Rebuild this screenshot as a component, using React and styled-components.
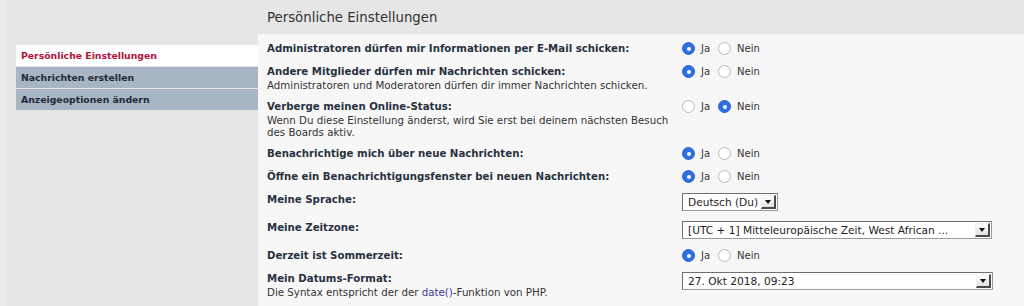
import React from "react";
import styled, { createGlobalStyle } from "styled-components";

const GlobalStyle = createGlobalStyle`
  html, body { margin: 0; padding: 0; }
  body {
    background: #e6e6e6;
    font-family: "DejaVu Sans", Verdana, sans-serif;
    color: #333;
  }
`;

const Page = styled.div`
  display: flex;
  min-height: 306px;
  border-left: 7px solid #ebebeb;
  background: #e6e6e6;
`;

const Sidebar = styled.nav`
  width: 242px;
  flex: none;
  padding: 45px 0 0 9px;
  display: flex;
  flex-direction: column;
  gap: 1px;
`;

const NavItem = styled.a`
  display: block;
  height: 21px;
  line-height: 22px;
  padding-left: 5px;
  font-size: 9.3px;
  font-weight: bold;
  text-decoration: none;
  background: ${(p) => (p.$active ? "#ffffff" : "#a7b5c4")};
  color: ${(p) => (p.$active ? "#b4103c" : "#1f2a38")};
`;

const Main = styled.main`
  flex: 1;
  display: flex;
  flex-direction: column;
`;

const Header = styled.h2`
  margin: 0;
  height: 34px;
  line-height: 36px;
  padding-left: 9px;
  font-size: 13.3px;
  font-weight: normal;
  color: #333;
`;

const Panel = styled.section`
  flex: 1;
  background: #f7f7f7;
  padding: 3px 0 0 9px;
`;

const Row = styled.div`
  display: flex;
  align-items: flex-start;
  padding: 4px 0;
`;

const Term = styled.div`
  width: 405px;
  padding-right: 10px;
  flex: none;
`;

const Label = styled.div`
  font-size: 10.2px;
  font-weight: bold;
  line-height: 15px;
  color: #28313f;
`;

const Explain = styled.div`
  font-size: 10.25px;
  line-height: 12px;
  color: #333;
`;

const Link = styled.a`
  color: #3b3b95;
  text-decoration: none;
`;

const Options = styled.div`
  display: flex;
  align-items: center;
  height: 15px;
  font-size: 10px;
  color: #333;
`;

const RadioLabel = styled.label`
  display: flex;
  align-items: center;
  margin-right: 8px;
`;

const Radio = styled.span`
  box-sizing: border-box;
  width: 13px;
  height: 13px;
  border-radius: 50%;
  margin-right: 6px;
  display: inline-flex;
  align-items: center;
  justify-content: center;
  background: ${(p) => (p.$checked ? "#2f6fe3" : "#ffffff")};
  border: 1px solid ${(p) => (p.$checked ? "#2a63cf" : "#b9b9b9")};
  &::after {
    content: "";
    width: 4px;
    height: 4px;
    border-radius: 50%;
    background: #fff;
    display: ${(p) => (p.$checked ? "block" : "none")};
  }
`;

const Select = styled.div`
  box-sizing: border-box;
  width: ${(p) => p.$width}px;
  height: 18px;
  margin: 1px 0;
  display: flex;
  align-items: stretch;
  background: #fff;
  border: 1px solid #6f6f6f;
  border-right-color: #9a9a9a;
  border-bottom-color: #9a9a9a;
  font-size: 10.6px;
  color: #222;
`;

const SelectText = styled.span`
  flex: 1;
  padding-left: 5px;
  line-height: 16px;
  white-space: nowrap;
  overflow: hidden;
`;

const Arrow = styled.span`
  box-sizing: border-box;
  width: 15px;
  margin: 1px;
  background: linear-gradient(#fdfdfd, #e2e2e2);
  border-right: 2px solid #4a4a4a;
  border-bottom: 2px solid #4a4a4a;
  border-left: 1px solid #f2f2f2;
  border-top: 1px solid #f2f2f2;
  display: flex;
  align-items: center;
  justify-content: center;
  &::after {
    content: "";
    border-left: 3px solid transparent;
    border-right: 3px solid transparent;
    border-top: 4px solid #111;
    margin-top: 1px;
  }
`;

function YesNo({ yes }) {
  return (
    <Options>
      <RadioLabel>
        <Radio $checked={yes} />
        Ja
      </RadioLabel>
      <RadioLabel>
        <Radio $checked={!yes} />
        Nein
      </RadioLabel>
    </Options>
  );
}

function Dropdown({ width, children }) {
  return (
    <Select $width={width}>
      <SelectText>{children}</SelectText>
      <Arrow />
    </Select>
  );
}

export default function App() {
  return (
    <>
      <GlobalStyle />
      <Page>
        <Sidebar>
          <NavItem $active href="#">Persönliche Einstellungen</NavItem>
          <NavItem href="#">Nachrichten erstellen</NavItem>
          <NavItem href="#">Anzeigeoptionen ändern</NavItem>
        </Sidebar>
        <Main>
          <Header>Persönliche Einstellungen</Header>
          <Panel>
            <Row>
              <Term>
                <Label>Administratoren dürfen mir Informationen per E-Mail schicken:</Label>
              </Term>
              <YesNo yes />
            </Row>
            <Row>
              <Term>
                <Label>Andere Mitglieder dürfen mir Nachrichten schicken:</Label>
                <Explain>Administratoren und Moderatoren dürfen dir immer Nachrichten schicken.</Explain>
              </Term>
              <YesNo yes />
            </Row>
            <Row>
              <Term>
                <Label>Verberge meinen Online-Status:</Label>
                <Explain>
                  Wenn Du diese Einstellung änderst, wird Sie erst bei deinem nächsten Besuch des Boards aktiv.
                </Explain>
              </Term>
              <YesNo yes={false} />
            </Row>
            <Row>
              <Term>
                <Label>Benachrichtige mich über neue Nachrichten:</Label>
              </Term>
              <YesNo yes />
            </Row>
            <Row>
              <Term>
                <Label>Öffne ein Benachrichtigungsfenster bei neuen Nachrichten:</Label>
              </Term>
              <YesNo yes />
            </Row>
            <Row>
              <Term>
                <Label>Meine Sprache:</Label>
              </Term>
              <Dropdown width={96}>Deutsch (Du)</Dropdown>
            </Row>
            <Row>
              <Term>
                <Label>Meine Zeitzone:</Label>
              </Term>
              <Dropdown width={310}>[UTC + 1] Mitteleuropäische Zeit, West African ...</Dropdown>
            </Row>
            <Row>
              <Term>
                <Label>Derzeit ist Sommerzeit:</Label>
              </Term>
              <YesNo yes />
            </Row>
            <Row>
              <Term>
                <Label>Mein Datums-Format:</Label>
                <Explain>
                  Die Syntax entspricht der der <Link href="#">date()</Link>-Funktion von PHP.
                </Explain>
              </Term>
              <Dropdown width={311}>27. Okt 2018, 09:23</Dropdown>
            </Row>
          </Panel>
        </Main>
      </Page>
    </>
  );
}
